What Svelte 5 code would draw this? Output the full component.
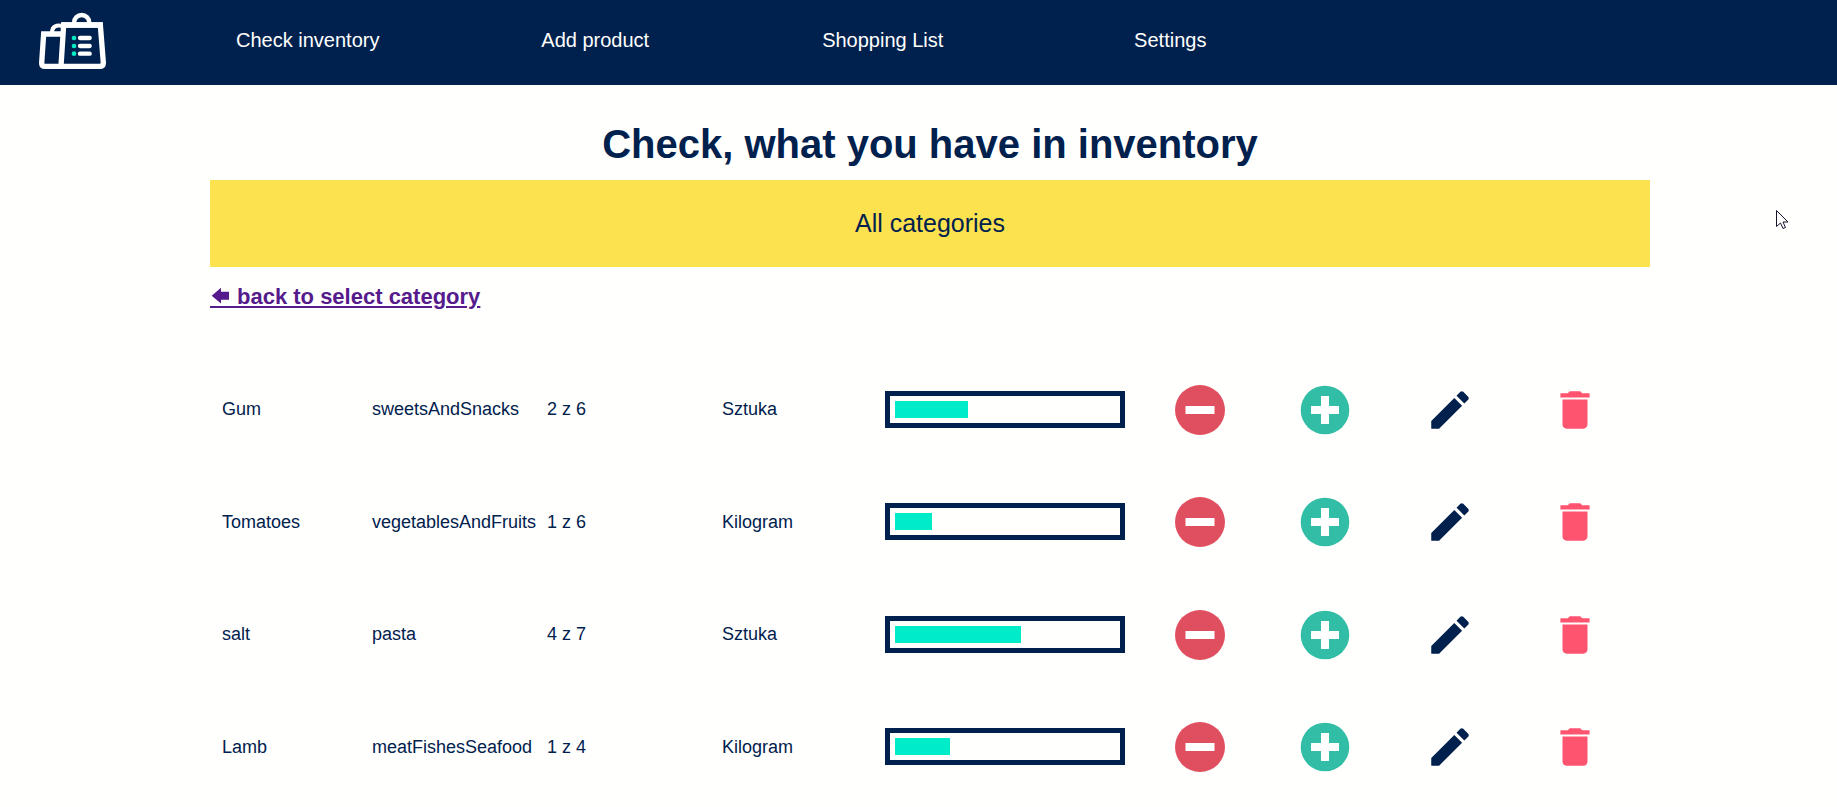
<script>
  const links = ['Check inventory', 'Add product', 'Shopping List', 'Settings'];

  const products = [
    { name: 'Gum', category: 'sweetsAndSnacks', amount: 2, max: 6, unit: 'Sztuka' },
    { name: 'Tomatoes', category: 'vegetablesAndFruits', amount: 1, max: 6, unit: 'Kilogram' },
    { name: 'salt', category: 'pasta', amount: 4, max: 7, unit: 'Sztuka' },
    { name: 'Lamb', category: 'meatFishesSeafood', amount: 1, max: 4, unit: 'Kilogram' }
  ];
</script>

<header>
  <a class="logo" href="#home" aria-label="Home">
    <svg viewBox="117 39 201 168" width="67" height="56" fill="none" stroke="#fff">
      <path d="M184 102H131L125 189Q125 199 135 199H299Q310 199 310 188L301 75H191L183 198" stroke-width="16" />
      <path d="M184 75H308" stroke-width="16" />
      <path d="M222.5 74V67A22.5 22 0 0 1 267.5 67V74" stroke-width="13" />
      <path d="M156 98C156 80 169 74 187 78" stroke-width="12" />
      <path d="M240 114H269M240 138H269M240 161H269" stroke-width="13" stroke-linecap="round" />
      <g fill="#00ebc7" stroke="none">
        <circle cx="222" cy="114" r="7" />
        <circle cx="222" cy="138" r="7" />
        <circle cx="222" cy="161" r="7" />
      </g>
    </svg>
  </a>
  <nav>
    {#each links as link}
      <a href="#nav">{link}</a>
    {/each}
  </nav>
</header>

<main>
  <h1>Check, what you have in inventory</h1>
  <div class="category">All categories</div>
  <a class="back" href="#categories"><svg class="arrow" width="27" height="21" viewBox="0 0 27 21" fill="currentColor" aria-hidden="true"><path d="M1.7 8.7L11 .7V4.7H19V12.7H11V16.5Z" /><path d="M0 19h27v2H0z" /></svg>back to select category</a>

  <div class="list">
    <table>
      <colgroup>
        <col class="name" />
        <col class="kind" />
        <col class="count" />
        <col class="unit" />
        <col class="level" />
        <col class="action" />
        <col class="action" />
        <col class="action" />
        <col class="action" />
      </colgroup>
      <tbody>
        {#each products as p}
          <tr>
            <td>{p.name}</td>
            <td>{p.category}</td>
            <td>{p.amount} z {p.max}</td>
            <td>{p.unit}</td>
            <td class="level-cell">
              <div class="bar"><div class="fill" style="width: {(p.amount / p.max) * 100}%"></div></div>
            </td>
            <td>
              <button aria-label="Decrease {p.name}">
                <svg viewBox="0 0 50 50"><circle cx="25" cy="25" r="25" fill="#e04f5f" /><path d="M10.5 21h29v8h-29z" fill="#fff" /></svg>
              </button>
            </td>
            <td>
              <button aria-label="Increase {p.name}">
                <svg viewBox="0 0 50 50"><circle cx="25" cy="25" r="24.3" fill="#32bea6" /><path d="M21 11h8v10h10v8H29v10h-8V29H11v-8h10z" fill="#fff" /></svg>
              </button>
            </td>
            <td>
              <button aria-label="Edit {p.name}">
                <svg viewBox="0 0 24 24" fill="#00214d"><path d="M3 17.25V21h3.75L17.81 9.94l-3.75-3.75L3 17.25zM20.71 7.04c.39-.39.39-1.02 0-1.41l-2.34-2.34c-.39-.39-1.02-.39-1.41 0l-1.83 1.83 3.75 3.75 1.83-1.83z" /></svg>
              </button>
            </td>
            <td>
              <button aria-label="Delete {p.name}">
                <svg viewBox="0 0 24 24" fill="#ff5470"><path d="M6 19c0 1.1.9 2 2 2h8c1.1 0 2-.9 2-2V7H6v12zM19 4h-3.5l-1-1h-5l-1 1H5v2h14V4z" /></svg>
              </button>
            </td>
          </tr>
        {/each}
      </tbody>
    </table>
  </div>
</main>

<svg class="cursor" width="13" height="20" viewBox="0 0 13 20" aria-hidden="true">
  <path d="M.5.5V16.5L4.5 13L7 18.5L9.5 17.5L7 12H12Z" fill="#fff" stroke="#14142b" />
</svg>

<style>
  :global(body) {
    background: #fffffe;
    color: #00214d;
    font-family: 'Liberation Sans', Arial, sans-serif;
  }

  header {
    display: flex;
    align-items: center;
    gap: 58px;
    padding: 13px 39px 16px;
    background: #00214d;
  }

  .logo svg {
    display: block;
    overflow: visible;
  }

  nav {
    display: grid;
    grid-template-columns: repeat(4, 1fr);
    flex: 0 1 1150px;
    padding-bottom: 2px;
  }

  nav a {
    color: #fffffe;
    font-size: 20px;
    line-height: 24px;
    text-align: center;
    text-decoration: none;
  }

  main {
    padding: 36px 187px 0 210px;
  }

  h1 {
    margin: 0 0 13px;
    font-size: 40px;
    line-height: 46px;
    text-align: center;
  }

  .category {
    margin-bottom: 16px;
    padding: 29px;
    background: #fde24f;
    font-size: 25px;
    line-height: 29px;
    text-align: center;
  }

  .back {
    display: table;
    color: #551a8b;
    font-size: 22px;
    font-weight: bold;
    line-height: 27px;
    text-decoration-thickness: 2px;
    text-underline-offset: 2px;
  }

  .arrow {
    vertical-align: -4px;
  }

  .list {
    margin-top: 43px;
    padding: 0 13px 0 12px;
  }

  table {
    width: 100%;
    height: 450px;
    border-collapse: collapse;
    table-layout: fixed;
  }

  .name {
    width: 150px;
  }

  .kind,
  .count {
    width: 175px;
  }

  .unit {
    width: 163px;
  }

  .level {
    width: 252px;
  }

  .action {
    width: 125px;
  }

  td {
    padding: 0;
    font-size: 18px;
    line-height: 20px;
    vertical-align: middle;
  }

  .level-cell {
    padding-right: 12px;
  }

  .bar {
    padding: 5px;
    border: 5px solid #00214d;
  }

  .fill {
    height: 17px;
    background: #00ebc7;
  }

  button {
    display: block;
    width: 50px;
    height: 50px;
    margin: 1px auto 0;
    padding: 0;
    border: 0;
    background: none;
    cursor: pointer;
  }

  button svg {
    display: block;
    width: 100%;
    height: 100%;
  }

  .cursor {
    position: absolute;
    top: 210px;
    right: 48px;
  }
</style>
